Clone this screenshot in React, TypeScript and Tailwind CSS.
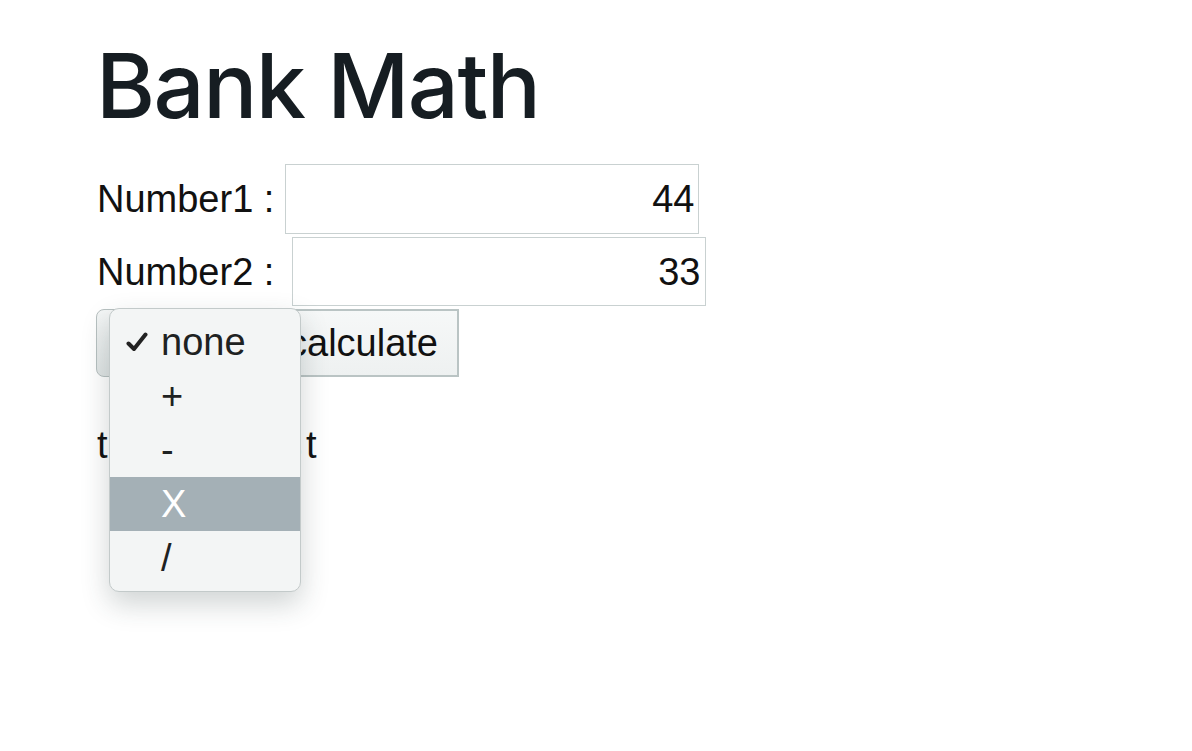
import React from "react";

const options = ["none", "+", "-", "X", "/"];

const App: React.FC = () => {
  const selected = "none";
  const hovered = "X";

  return (
    <div className="min-h-[751px] bg-white pl-[96px] pt-[31px] text-[#111] font-['Liberation_Sans',Arial,sans-serif]">
      {/* Title */}
      <h1 className="font-['Inter',sans-serif] text-[90px] leading-[110px] font-medium tracking-[-1.5px] text-[#161d22]">
        Bank Math
      </h1>

      <div className="mt-[23px] flex flex-col gap-[3px] text-[38px] leading-[44px]">
        <div className="flex items-center">
          <span className="pl-px">Number1 :</span>
          <div className="ml-[11px] flex h-[70px] w-[414px] items-center justify-end border border-[#c9d1d1] bg-white pr-[4px]">
            44
          </div>
        </div>
        <div className="flex items-center">
          <span className="pl-px">Number2 :</span>
          <div className="ml-[18px] flex h-[69px] w-[414px] items-center justify-end border border-[#c9d1d1] bg-white pr-[5px]">
            33
          </div>
        </div>

        {/* operator select + button */}
        <div className="relative flex items-center">
          <div className="flex h-[68px] w-[163px] items-center rounded-[8px] border border-[#b7c0c0] bg-gradient-to-b from-[#f4f6f6] to-[#dfe4e4] pl-[14px]">
            none
          </div>
          <div className="ml-[3px] flex h-[68px] w-[197px] items-center justify-end border-2 border-[#bac4c4] bg-gradient-to-b from-[#f6f8f8] to-[#eef1f1] pr-[19px]">
            calculate
          </div>

          {/* open dropdown */}
          <div className="absolute left-[13px] top-[-1px] z-10 w-[192px] rounded-[10px] border border-[#c3caca] bg-[#f3f5f5] py-[6px] shadow-[0_12px_28px_rgba(40,60,60,0.22)]">
            {options.map((o) => (
              <div
                key={o}
                className={`flex h-[54px] items-center ${
                  o === hovered ? "bg-[#a4b0b6] text-white" : "text-[#1e2222]"
                }`}
              >
                <span className="flex w-[51px] justify-center pl-[3px]">
                  {o === selected ? (
                    <svg width="22" height="20" viewBox="0 0 22 20">
                      <path
                        d="M2.5 11.5 L8 17 L19.5 2.5"
                        fill="none"
                        stroke="#222"
                        strokeWidth="4"
                        strokeLinecap="round"
                        strokeLinejoin="round"
                      />
                    </svg>
                  ) : null}
                </span>
                <span>{o}</span>
              </div>
            ))}
          </div>
        </div>
      </div>

      <p className="mt-[46px] pl-px text-[38px] leading-[44px]">
        the total cos<span className="ml-[4px]">t</span>
      </p>
    </div>
  );
};

export default App;
